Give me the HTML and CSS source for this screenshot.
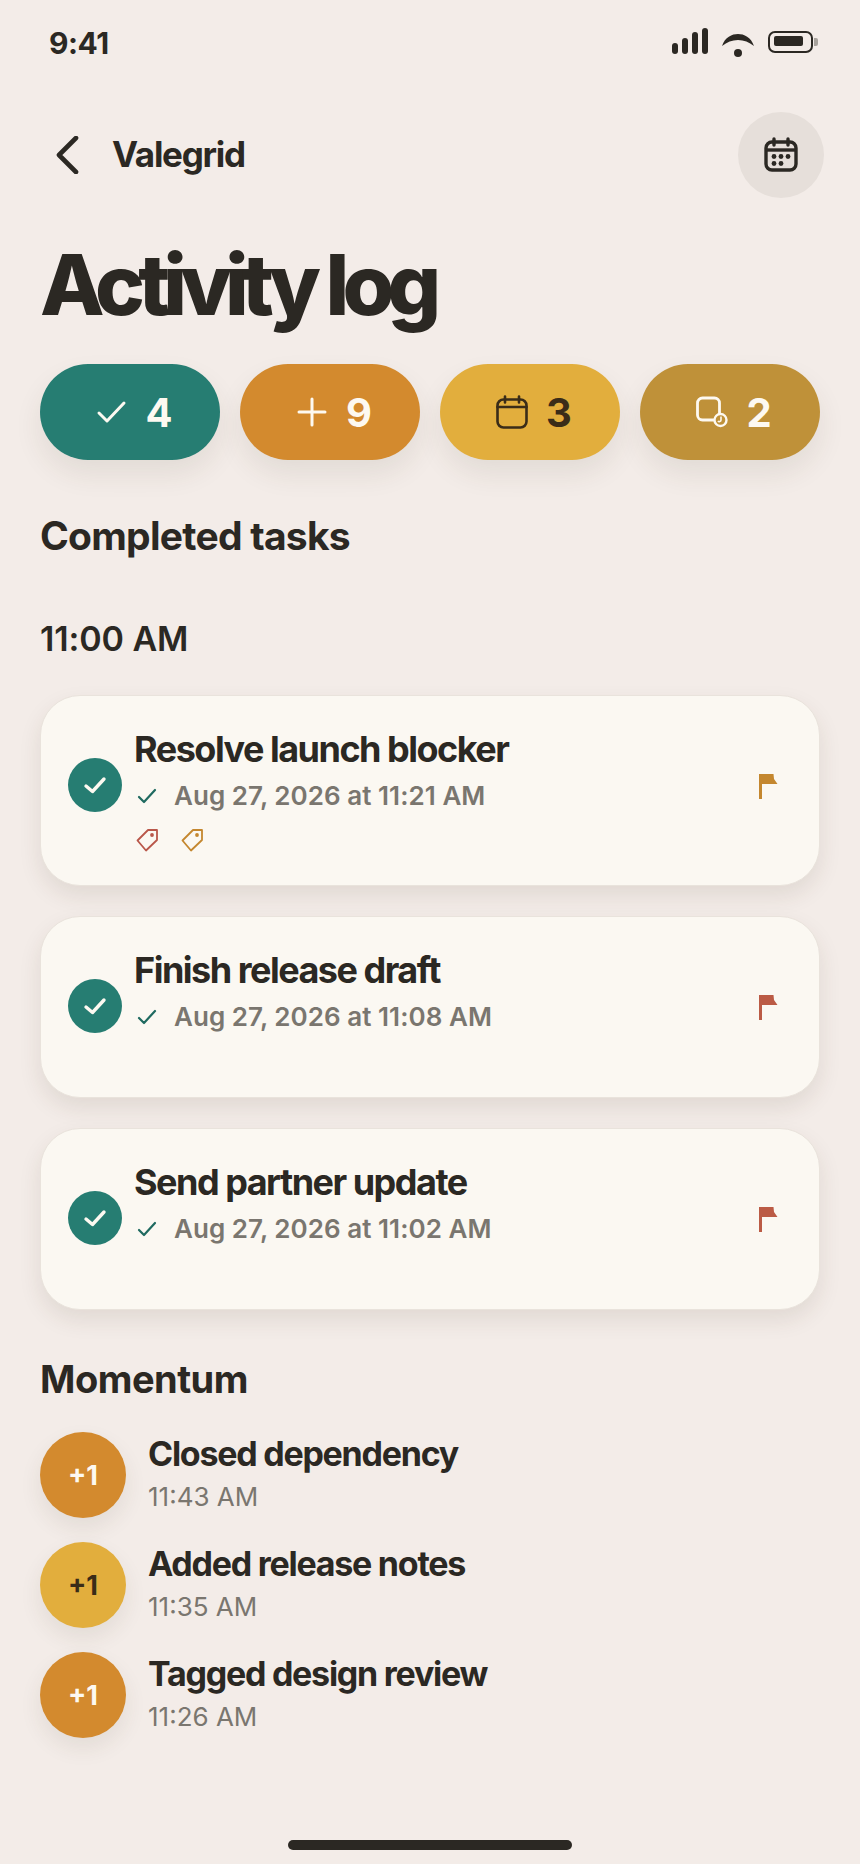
FILE: index.html
```html
<!DOCTYPE html>
<html lang="en">
<head>
<meta charset="utf-8">
<title>Activity log</title>
<link rel="stylesheet" href="styles.css">
</head>
<body>
<div class="screen">
  <div class="status">
    <span class="time">9:41</span>
    <svg class="status-icons" width="146" height="30" viewBox="0 0 146 30">
      <g fill="#2b2823">
        <rect x="0" y="16" width="6" height="11" rx="3"/>
        <rect x="10" y="11" width="6" height="16" rx="3"/>
        <rect x="20" y="5" width="6" height="22" rx="3"/>
        <rect x="30" y="1" width="6" height="26" rx="3"/>
        <path d="M50 19C53 10 60 7 66 7C72 7 79 10 82 19C77 15 72 13 66 13C60 13 55 15 50 19Z"/>
        <circle cx="66" cy="26" r="4"/>
        <rect x="102" y="9" width="29" height="10" rx="2"/>
      </g>
      <rect x="97" y="5" width="43" height="20" rx="6" fill="none" stroke="#2b2823" stroke-width="2"/>
      <path d="M142 11h2a2 2 0 0 1 2 2v4a2 2 0 0 1-2 2h-2z" fill="#a8a39d"/>
    </svg>
  </div>

  <header class="nav">
    <svg class="back" width="26" height="38" viewBox="0 0 26 38"><path d="M22 2L5 19L22 36" fill="none" stroke="#2b2823" stroke-width="4.6" stroke-linecap="round" stroke-linejoin="round"/></svg>
    <span class="brand">Valegrid</span>
    <button class="cal-btn" type="button">
      <svg width="36" height="36" viewBox="0 0 36 36">
        <rect x="3" y="5" width="30" height="28" rx="6" fill="none" stroke="#2b2823" stroke-width="3.4"/>
        <path d="M3 13h30" stroke="#2b2823" stroke-width="3.4"/>
        <path d="M11 2v6M25 2v6" stroke="#2b2823" stroke-width="3.4" stroke-linecap="round"/>
        <g fill="#2b2823"><circle cx="11" cy="19.5" r="2.4"/><circle cx="18" cy="19.5" r="2.4"/><circle cx="25" cy="19.5" r="2.4"/><circle cx="11" cy="26.5" r="2.4"/><circle cx="18" cy="26.5" r="2.4"/></g>
      </svg>
    </button>
  </header>

  <h1 class="title">Activity log</h1>

  <div class="pills">
    <div class="pill pill-teal">
      <svg width="32" height="32" viewBox="0 0 32 32"><path d="M4 17L12 25L29 7" fill="none" stroke="#fdf9f1" stroke-width="3" stroke-linecap="round" stroke-linejoin="round"/></svg>
      <span>4</span>
    </div>
    <div class="pill pill-orange">
      <svg width="32" height="32" viewBox="0 0 32 32"><path d="M16 3V29M3 16H29" fill="none" stroke="#fdf9f1" stroke-width="3" stroke-linecap="round"/></svg>
      <span>9</span>
    </div>
    <div class="pill pill-yellow">
      <svg width="32" height="34" viewBox="0 0 32 34">
        <rect x="1.5" y="4.5" width="29" height="28" rx="6" fill="none" stroke="#3a2c18" stroke-width="2.6"/>
        <path d="M1.5 12h29M9 1.5v6M23 1.5v6" fill="none" stroke="#3a2c18" stroke-width="2.6" stroke-linecap="round"/>
      </svg>
      <span>3</span>
    </div>
    <div class="pill pill-ochre">
      <svg width="32" height="32" viewBox="0 0 32 32">
        <rect x="1.5" y="2" width="22" height="22" rx="5" fill="none" stroke="#fdf9f1" stroke-width="2.8"/>
        <circle cx="24.5" cy="24" r="6" fill="#bf9139" stroke="#fdf9f1" stroke-width="2.4"/>
        <path d="M25 20.5v3.5a1.6 1.6 0 0 1-3 .8" fill="none" stroke="#fdf9f1" stroke-width="1.6"/>
      </svg>
      <span>2</span>
    </div>
  </div>

  <h2 class="section-heading">Completed tasks</h2>
  <h3 class="hour">11:00 AM</h3>

  <div class="cards">
    <article class="card">
      <div class="done"><svg width="26" height="22" viewBox="0 0 26 22"><path d="M4 12L10.5 17.5L22 5" fill="none" stroke="#fdf9f1" stroke-width="3.4" stroke-linecap="round" stroke-linejoin="round"/></svg></div>
      <div class="card-body">
        <div class="card-title">Resolve launch blocker</div>
        <div class="meta">
          <svg width="20" height="16" viewBox="0 0 20 16"><path d="M2 9L7 14L18 2" fill="none" stroke="#1f6a60" stroke-width="2.2" stroke-linecap="round" stroke-linejoin="round"/></svg>
          <span>Aug 27, 2026 at 11:21 AM</span>
        </div>
        <div class="tags">
          <svg width="23" height="24" viewBox="0 0 23 24"><path d="M12 2H21V12L10 22.5L1.5 12.5Z" fill="none" stroke="#b9574a" stroke-width="1.8" stroke-linejoin="round"/><circle cx="16" cy="7" r="1.9" fill="#b9574a"/></svg>
          <svg width="23" height="24" viewBox="0 0 23 24"><path d="M12 2H21V12L10 22.5L1.5 12.5Z" fill="none" stroke="#c4872f" stroke-width="1.8" stroke-linejoin="round"/><circle cx="16" cy="7" r="1.9" fill="#c4872f"/></svg>
        </div>
      </div>
      <svg class="flag" width="19" height="25" viewBox="0 0 19 25"><path d="M0 0H14.5L15 5L18.5 10H3V25H0Z" fill="#c4872f"/></svg>
    </article>

    <article class="card">
      <div class="done"><svg width="26" height="22" viewBox="0 0 26 22"><path d="M4 12L10.5 17.5L22 5" fill="none" stroke="#fdf9f1" stroke-width="3.4" stroke-linecap="round" stroke-linejoin="round"/></svg></div>
      <div class="card-body">
        <div class="card-title">Finish release draft</div>
        <div class="meta">
          <svg width="20" height="16" viewBox="0 0 20 16"><path d="M2 9L7 14L18 2" fill="none" stroke="#1f6a60" stroke-width="2.2" stroke-linecap="round" stroke-linejoin="round"/></svg>
          <span>Aug 27, 2026 at 11:08 AM</span>
        </div>
      </div>
      <svg class="flag" width="19" height="25" viewBox="0 0 19 25"><path d="M0 0H14.5L15 5L18.5 10H3V25H0Z" fill="#bb5b45"/></svg>
    </article>

    <article class="card">
      <div class="done"><svg width="26" height="22" viewBox="0 0 26 22"><path d="M4 12L10.5 17.5L22 5" fill="none" stroke="#fdf9f1" stroke-width="3.4" stroke-linecap="round" stroke-linejoin="round"/></svg></div>
      <div class="card-body">
        <div class="card-title">Send partner update</div>
        <div class="meta">
          <svg width="20" height="16" viewBox="0 0 20 16"><path d="M2 9L7 14L18 2" fill="none" stroke="#1f6a60" stroke-width="2.2" stroke-linecap="round" stroke-linejoin="round"/></svg>
          <span>Aug 27, 2026 at 11:02 AM</span>
        </div>
      </div>
      <svg class="flag" width="19" height="25" viewBox="0 0 19 25"><path d="M0 0H14.5L15 5L18.5 10H3V25H0Z" fill="#bb5b45"/></svg>
    </article>
  </div>

  <h2 class="momentum-heading">Momentum</h2>
  <ul class="feed">
    <li class="feed-row">
      <div class="score score-orange">+1</div>
      <div class="feed-text"><div class="feed-title">Closed dependency</div><div class="feed-time">11:43 AM</div></div>
    </li>
    <li class="feed-row">
      <div class="score score-yellow">+1</div>
      <div class="feed-text"><div class="feed-title">Added release notes</div><div class="feed-time">11:35 AM</div></div>
    </li>
    <li class="feed-row">
      <div class="score score-orange">+1</div>
      <div class="feed-text"><div class="feed-title">Tagged design review</div><div class="feed-time">11:26 AM</div></div>
    </li>
  </ul>

  <div class="home"></div>
</div>
</body>
</html>
```
FILE: styles.css
```css
* { box-sizing: border-box; }
html, body { margin: 0; padding: 0; }
body {
  background: #f3ece8;
  color: #2b2823;
  font-family: Inter, "Noto Sans", sans-serif;
}
.screen {
  width: 860px;
  height: 1864px;
  overflow: hidden;
  display: flex;
  flex-direction: column;
  padding: 0 40px;
}
.status {
  height: 62px;
  padding: 27px 2px 0 9px;
  display: flex;
  justify-content: space-between;
  align-items: flex-start;
}
.time {
  font-size: 30px;
  line-height: 32px;
  font-weight: 700;
  letter-spacing: -0.5px;
}
.status-icons { display: block; }
.nav {
  margin-top: 50px;
  height: 86px;
  display: flex;
  align-items: center;
  padding-left: 14px;
}
.back { display: block; }
.brand {
  margin-left: 32px;
  padding-bottom: 2px;
  font-size: 35px;
  font-weight: 700;
  letter-spacing: -1.25px;
}
.cal-btn {
  margin-left: auto;
  margin-right: -4px;
  width: 86px;
  height: 86px;
  border: 0;
  border-radius: 50%;
  background: #e6dfda;
  display: flex;
  align-items: center;
  justify-content: center;
  padding: 0;
}
.title {
  margin: 41px 0 0;
  font-size: 84px;
  line-height: 92px;
  font-weight: 800;
  letter-spacing: -6.9px;
}
.pills {
  margin-top: 33px;
  display: flex;
  gap: 20px;
}
.pill {
  width: 180px;
  height: 96px;
  border-radius: 48px;
  display: flex;
  align-items: center;
  justify-content: center;
  gap: 18px;
  font-size: 40px;
  font-weight: 700;
  color: #fdf9f1;
  padding-left: 8px;
  box-shadow: 0 14px 28px rgba(70, 50, 30, 0.09);
}
.pill-teal { background: #267d72; }
.pill-orange { background: #d38a2e; }
.pill-yellow { background: #e2ae3d; color: #3a2c18; }
.pill-ochre { background: #bf9139; }
.section-heading {
  margin: 52px 0 0;
  font-size: 39px;
  line-height: 48px;
  font-weight: 700;
  letter-spacing: -0.75px;
}
.hour {
  margin: 57px 0 0;
  font-size: 34px;
  line-height: 44px;
  font-weight: 600;
  letter-spacing: -0.1px;
}
.cards {
  margin-top: 34px;
  display: flex;
  flex-direction: column;
  gap: 30px;
}
.card {
  min-height: 182px;
  background: #fbf8f2;
  border: 1px solid #e9e3dc;
  border-radius: 40px;
  padding: 31px 41px 33px 27px;
  display: flex;
  align-items: flex-start;
  box-shadow: 0 10px 22px rgba(70, 50, 30, 0.1);
}
.done {
  width: 54px;
  height: 54px;
  margin-top: 31px;
  border-radius: 50%;
  background: #267d72;
  display: flex;
  align-items: center;
  justify-content: center;
  flex: none;
}
.card-body { margin-left: 12px; flex: 1; }
.card-title {
  font-size: 36px;
  line-height: 44px;
  font-weight: 700;
  letter-spacing: -1.5px;
}
.meta {
  margin-top: 8px;
  display: flex;
  align-items: center;
  gap: 17px;
  padding-left: 3px;
  font-size: 26px;
  line-height: 34px;
  font-weight: 600;
  letter-spacing: 0.05px;
  color: #7a766f;
}
.meta svg { display: block; }
.tags {
  margin-top: 15px;
  display: flex;
  gap: 22px;
  padding-left: 2px;
  height: 24px;
}
.flag {
  margin-top: 47px;
  flex: none;
  display: block;
}
.momentum-heading {
  margin: 46px 0 0;
  font-size: 38px;
  line-height: 46px;
  font-weight: 700;
  letter-spacing: -0.5px;
}
.feed {
  list-style: none;
  margin: 30px 0 0;
  padding: 0;
  display: flex;
  flex-direction: column;
  gap: 24px;
}
.feed-row {
  display: flex;
  align-items: center;
  gap: 22px;
  height: 86px;
}
.feed-text { padding-bottom: 4px; }
.score {
  width: 86px;
  height: 86px;
  border-radius: 50%;
  display: flex;
  align-items: center;
  justify-content: center;
  font-size: 27px;
  font-weight: 700;
  flex: none;
  box-shadow: 0 10px 22px rgba(70, 50, 30, 0.09);
}
.score-orange { background: #d38a2e; color: #fdf9f1; }
.score-yellow { background: #e2ae3d; color: #3a2c18; }
.feed-title {
  font-size: 34px;
  line-height: 42px;
  font-weight: 650;
  letter-spacing: -1.25px;
}
.feed-time {
  margin-top: 5px;
  font-size: 26px;
  line-height: 34px;
  color: #7a766f;
}
.home {
  position: absolute;
  left: 288px;
  top: 1840px;
  width: 284px;
  height: 10px;
  border-radius: 5px;
  background: #2b2823;
}
```
